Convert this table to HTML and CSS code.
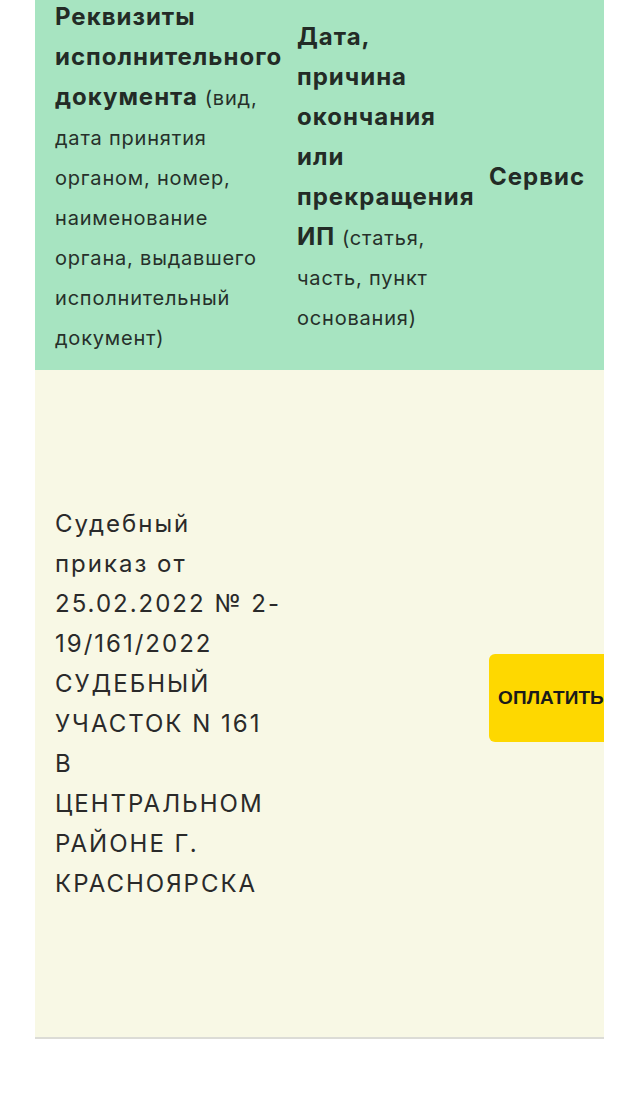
FILE: index.html
```html
<!DOCTYPE html>
<html lang="ru">
<head>
<meta charset="utf-8">
<link rel="stylesheet" href="styles.css">
</head>
<body>
<div class="table-wrap">
  <div class="row head">
    <div class="cell c1"><b>Реквизиты исполнительного документа</b> <span class="note">(вид, дата принятия органом, номер, наименование органа, выдавшего исполнительный документ)</span></div>
    <div class="cell c2"><b>Дата, причина окончания или прекращения ИП</b> <span class="note">(статья, часть, пункт основания)</span></div>
    <div class="cell c3"><b>Сервис</b></div>
  </div>
  <div class="row body-row">
    <div class="cell c1">Судебный приказ от 25.02.2022 № 2-19/161/2022 СУДЕБНЫЙ УЧАСТОК N 161 В ЦЕНТРАЛЬНОМ РАЙОНЕ Г. КРАСНОЯРСКА</div>
    <div class="cell c2"></div>
    <div class="cell c3"><span class="pay">ОПЛАТИТЬ</span></div>
  </div>
</div>
</body>
</html>
```
FILE: styles.css
```css
html, body {
  margin: 0;
  background: #ffffff;
}
body {
  font-family: Inter, Roboto, sans-serif;
  color: #232b26;
}
.table-wrap {
  margin: -16px 0 0 35px;
  width: 569px;
  overflow: hidden;
}
.row {
  display: grid;
  grid-template-columns: 262px 192px 160px;
  align-items: center;
}
.head {
  background: #a7e4c1;
  height: 386px;
}
.body-row {
  background: #f8f8e5;
  height: 667px;
  border-bottom: 2px solid #dcdcd6;
}
.cell {
  font-size: 24px;
  line-height: 40px;
}
.c1 {
  padding: 0 13px 0 20px;
}
.c2 {
  padding: 0 12px 0 0;
}
.c3 {
  display: flex;
  align-items: center;
}
.head b {
  font-weight: 700;
  letter-spacing: 1px;
}
.note {
  font-size: 20px;
  line-height: 1;
  letter-spacing: 0.8px;
  color: #26302a;
}
.body-row .c1 {
  color: #2a2a2a;
  letter-spacing: 2px;
}
.pay {
  flex: none;
  width: 130px;
  height: 88px;
  margin-bottom: 11px;
  box-sizing: border-box;
  padding-left: 9px;
  display: flex;
  align-items: center;
  background: #fed800;
  border-radius: 6px;
  font-family: "Liberation Sans", Arial, sans-serif;
  font-weight: 700;
  font-size: 19px;
  letter-spacing: 0.1px;
  color: #1a1a1a;
}
```
